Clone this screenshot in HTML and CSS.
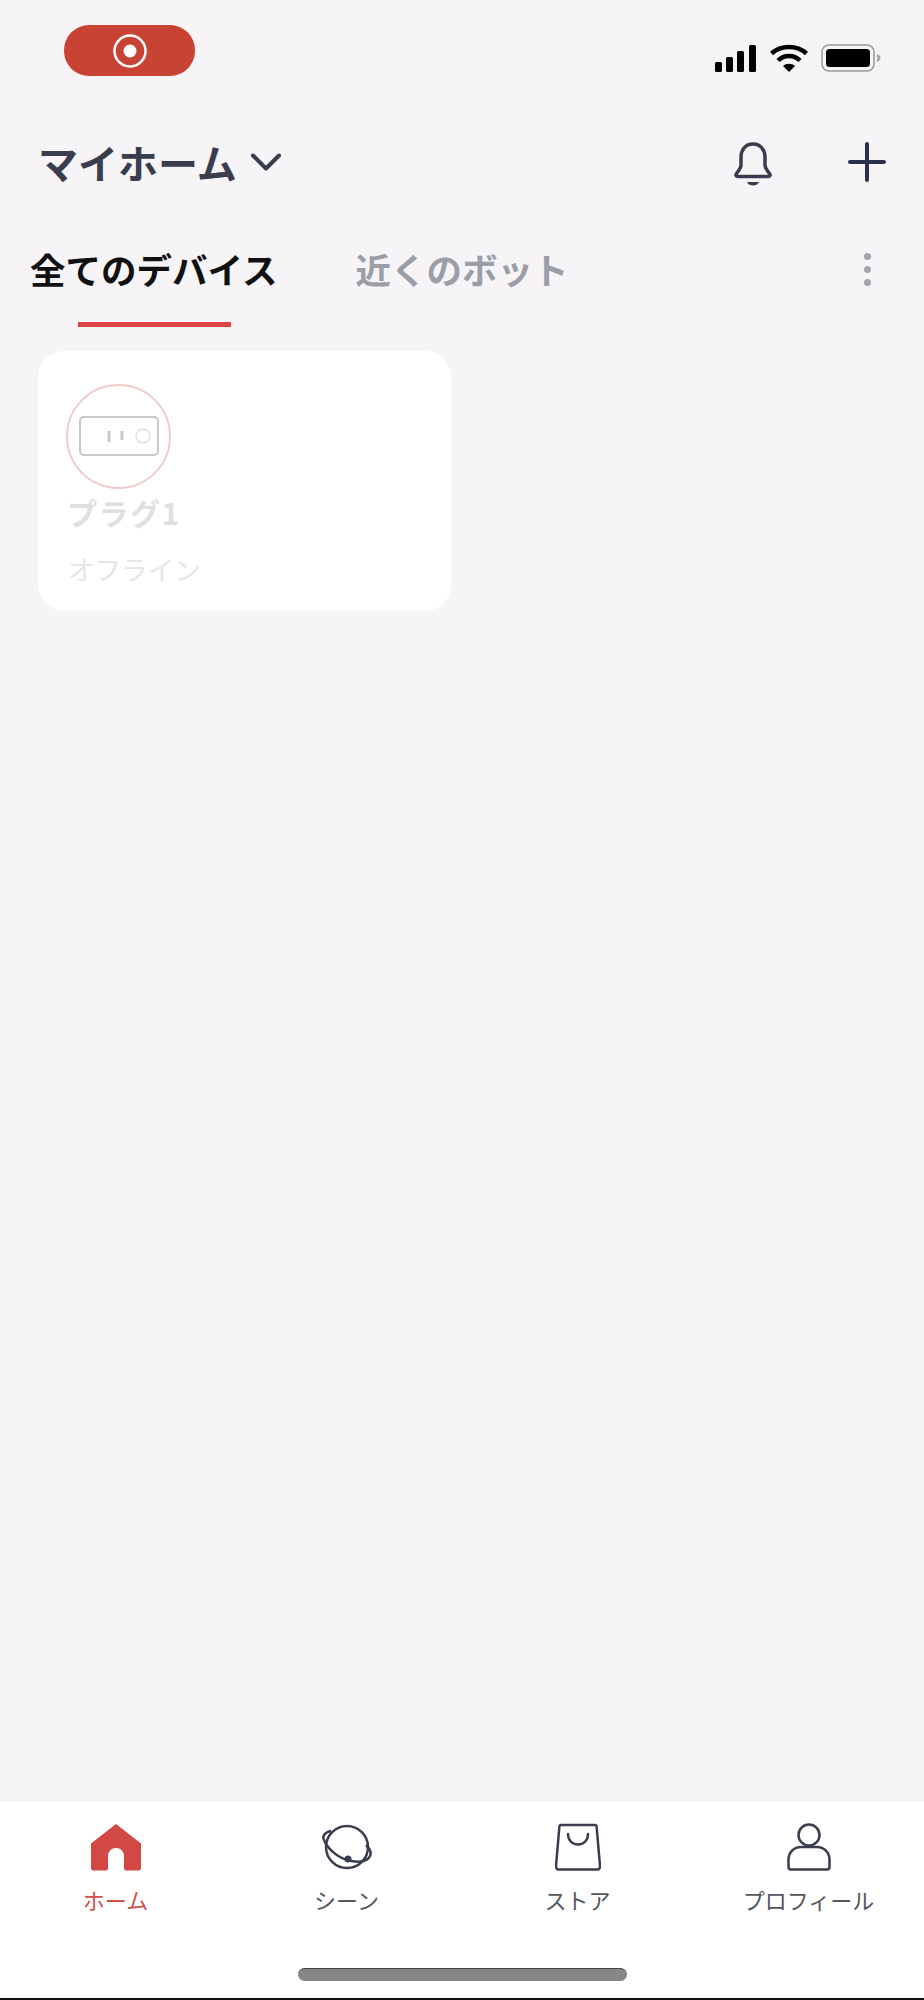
FILE: index.html
```html
<!DOCTYPE html>
<html lang="ja">
	<head>
		<meta charset="UTF-8">
		<title>マイホーム</title>
		<link rel="stylesheet" href="styles.css">
	</head>
	<body>
		<div class="app">
			<!-- status bar -->
			<div class="statusbar">
				<div class="rec-pill">
					<svg width="36" height="36" viewBox="0 0 36 36"><circle cx="18" cy="18" r="15.5" fill="none" stroke="#fff" stroke-width="2.5"/><circle cx="18" cy="18" r="6.5" fill="#fff"/></svg>
				</div>
				<div class="status-icons">
					<svg width="42" height="28" viewBox="0 0 42 28" fill="#000"><rect x="0" y="18" width="7" height="10" rx="1.5"/><rect x="11" y="13" width="7" height="15" rx="1.5"/><rect x="22" y="7" width="7" height="21" rx="1.5"/><rect x="34" y="1" width="7" height="27" rx="1.5"/></svg>
					<svg width="38" height="28" viewBox="0 0 38 28"><path d="M1.5 9.5C11 .8 27 .8 36.5 9.5" fill="none" stroke="#000" stroke-width="4.500"/><path d="M8 16.500C14 10.500 24 10.500 30 16.500" fill="none" stroke="#000" stroke-width="4.500"/><path d="M19 28l-6-6c3.400-3 8.600-3 12 0z" fill="#000"/></svg>
					<svg width="60" height="28" viewBox="0 0 60 28"><rect x="1" y="1" width="52" height="26" rx="7" fill="none" stroke="#999" stroke-width="1.500"/><rect x="5" y="5" width="44" height="18" rx="3.500" fill="#000"/><path d="M56 10c2.500.8 3.500 2.400 3.500 4s-1 3.200-3.500 4z" fill="#aaa"/></svg>
				</div>
			</div>

			<!-- home title and actions -->
			<div class="header">
				<div class="home-name">
					<span>マイホーム</span>
					<svg width="32" height="18" viewBox="0 0 32 18"><path d="M3 2.500l13 13 13-13" fill="none" stroke="#3a3d4d" stroke-width="4" stroke-linecap="round" stroke-linejoin="round"/></svg>
				</div>
				<div class="header-actions">
					<svg class="bell" width="38" height="44" viewBox="0 0 38 44" fill="none" stroke="#3a3d4d" stroke-width="3.500" stroke-linejoin="round"><path d="M19 2c-7.500 0-12 5.800-12 13v8c0 3-2 5.500-4.500 8.500-1.200 1.500-.6 3 1.500 3h30c2.100 0 2.700-1.500 1.500-3C33 28.500 31 26 31 23v-8c0-7.200-4.500-13-12-13z"/><path d="M13 40h12c-1 2.500-3.500 3.500-6 3.500s-5-1-6-3.500z" fill="#3a3d4d" stroke="none"/></svg>
					<svg width="38" height="40" viewBox="0 0 38 40"><path d="M19 2v36M2 20h34" fill="none" stroke="#2b3050" stroke-width="4" stroke-linecap="round"/></svg>
				</div>
			</div>

			<!-- tabs -->
			<div class="tabs">
				<span class="tab tab-active">全てのデバイス</span>
				<span class="tab">近くのボット</span>
				<div class="more-dots"><i></i><i></i><i></i></div>
			</div>
			<div class="tab-line"></div>

			<!-- device list -->
			<div class="main">
				<div class="card">
					<div class="card-icon">
						<svg width="80" height="40" viewBox="0 0 80 40" fill="none"><rect x="1" y="1" width="78" height="38" rx="4" stroke="#c6c8cc" stroke-width="2"/><path d="M30 15v11" stroke="#c6c8cc" stroke-width="3"/><path d="M43 15v9" stroke="#c6c8cc" stroke-width="3"/><circle cx="64" cy="20" r="7" stroke="#e2e2e4" stroke-width="1.500"/></svg>
					</div>
					<div class="card-name">プラグ1</div>
					<div class="card-status">オフライン</div>
				</div>
			</div>

			<!-- bottom navigation -->
			<div class="bottom-nav">
				<div class="nav-items">
					<div class="nav-item nav-active">
						<svg width="50" height="48" viewBox="0 0 50 48"><path d="M25 1L50 20.500V45c0 1.500-1 2.500-2.500 2.500H35c-1.500 0-2-1-2-2.500V33c0-4.500-3.500-8-8-8s-8 3.500-8 8v12c0 1.500-.5 2.500-2 2.500H2.500C1 47.500 0 46.500 0 45V20.500z" fill="#d14844"/></svg>
						<span>ホーム</span>
					</div>
					<div class="nav-item">
						<svg width="52" height="48" viewBox="0 0 52 48" fill="none" stroke="#3a3d4d" stroke-width="2.500"><circle cx="26" cy="24" r="21"/><path d="M10 8C4 9 1 13 3 17c3 8 13 17 23 20 9 2.500 20 3 23-4 2-4-1-8-4-11"/><circle cx="27" cy="36" r="3.500" fill="#3a3d4d" stroke="none"/></svg>
						<span>シーン</span>
					</div>
					<div class="nav-item">
						<svg width="46" height="48" viewBox="0 0 46 48" fill="none" stroke="#3a3d4d" stroke-width="2.500" stroke-linejoin="round"><path d="M6 2h34c1 0 1.500.5 1.600 1.500L45 43c.1 2-.8 3.500-2.500 3.500h-39C1.800 46.500.9 45 1 43L4.400 3.500C4.500 2.500 5 2 6 2z"/><path d="M13 11c0 6 4 10.500 10 10.500S33 17 33 11" stroke-linecap="round"/></svg>
						<span>ストア</span>
					</div>
					<div class="nav-item">
						<svg width="44" height="48" viewBox="0 0 44 48" fill="none" stroke="#3a3d4d" stroke-width="2.500" stroke-linejoin="round"><circle cx="22" cy="12" r="10.500"/><path d="M14 24h16c7 0 12.500 5.500 12.500 12.500V44c0 1.500-1 2.500-2.500 2.500H4c-1.500 0-2.500-1-2.500-2.500v-7.500C1.500 29.500 7 24 14 24z"/></svg>
						<span>プロフィール</span>
					</div>
				</div>
				<div class="home-bar"></div>
			</div>
		</div>
	</body>
</html>
```

FILE: styles.css
```css
html {
	background-color: #f6f4f7;
}
body {
	margin: 0;
	font-family: "Noto Sans CJK JP", "Noto Sans", sans-serif;
}
svg {
	display: block;
}
.app {
	display: flex;
	flex-direction: column;
	width: 924px;
	height: 2000px;
	overflow: hidden;
}

.statusbar {
	display: flex;
	justify-content: space-between;
	margin-top: 25px;
	padding: 0 43px 0 64px;
	height: 51px;
}
.rec-pill {
	display: flex;
	justify-content: center;
	align-items: center;
	width: 131px;
	height: 51px;
	border-radius: 25px;
	background-color: #c94335;
}
.status-icons {
	display: flex;
	align-items: center;
	gap: 13px;
	height: 28px;
	margin-top: 19px;
}

.header {
	display: flex;
	justify-content: space-between;
	align-items: center;
	height: 60px;
	margin-top: 56px;
	padding: 0 38px 0 38px;
}
.home-name {
	display: flex;
	align-items: center;
	gap: 13px;
	font-size: 40px;
	line-height: 60px;
	font-weight: 600;
	color: #3a3d4d;
}
.header-actions {
	display: flex;
	align-items: center;
	gap: 76px;
}
.bell {
	margin-top: 4px;
}

.tabs {
	display: flex;
	align-items: center;
	height: 60px;
	margin-top: 47px;
	padding-left: 30px;
	padding-right: 53px;
}
.tab {
	font-size: 35.5px;
	line-height: 60px;
	font-weight: 600;
	color: #9a9ea6;
	margin-right: 78px;
}
.tab-active {
	color: #111;
}
.more-dots {
	display: flex;
	flex-direction: column;
	gap: 6px;
	margin-left: auto;
}
.more-dots i {
	display: block;
	width: 7px;
	height: 7px;
	border-radius: 50%;
	background-color: #a3a6ab;
}
.tab-line {
	width: 153px;
	height: 5px;
	margin: 23px 0 0 78px;
	background-color: #dd4343;
}

.main {
	flex: 1;
	padding: 24px 0 0 38px;
}
.card {
	box-sizing: border-box;
	width: 413px;
	height: 260px;
	padding: 33px 0 0 28px;
	border-radius: 26px;
	background-color: #fff;
}
.card-icon {
	box-sizing: border-box;
	display: flex;
	justify-content: center;
	align-items: center;
	width: 105px;
	height: 105px;
	padding-bottom: 1px;
	border: 2.5px solid #efcccc;
	border-radius: 50%;
}
.card-name {
	margin-left: 1px;
	font-size: 30px;
	line-height: 44px;
	margin-top: 1px;
	letter-spacing: 1.5px;
	font-weight: 700;
	color: #e0e0e2;
}
.card-status {
	font-size: 26.5px;
	line-height: 38px;
	margin-top: 16px;
	margin-left: 2px;
	color: #e6e6e8;
}

.bottom-nav {
	box-sizing: border-box;
	height: 198px;
	padding-top: 21px;
	background-color: #fff;
	border-bottom: 2px solid #111;
}
.nav-items {
	display: grid;
	grid-template-columns: repeat(4, 231px);
}
.nav-item {
	display: flex;
	flex-direction: column;
	align-items: center;
	font-size: 22px;
	line-height: 32px;
	color: #55565e;
}
.nav-item span {
	margin-top: 12px;
}
.nav-active {
	color: #d14f4c;
}
.home-bar {
	width: 329px;
	height: 13px;
	margin: 53px auto 0;
	border-radius: 7px;
	background-color: #878787;
	border-top: 1px solid #444;
	box-sizing: border-box;
}
```
